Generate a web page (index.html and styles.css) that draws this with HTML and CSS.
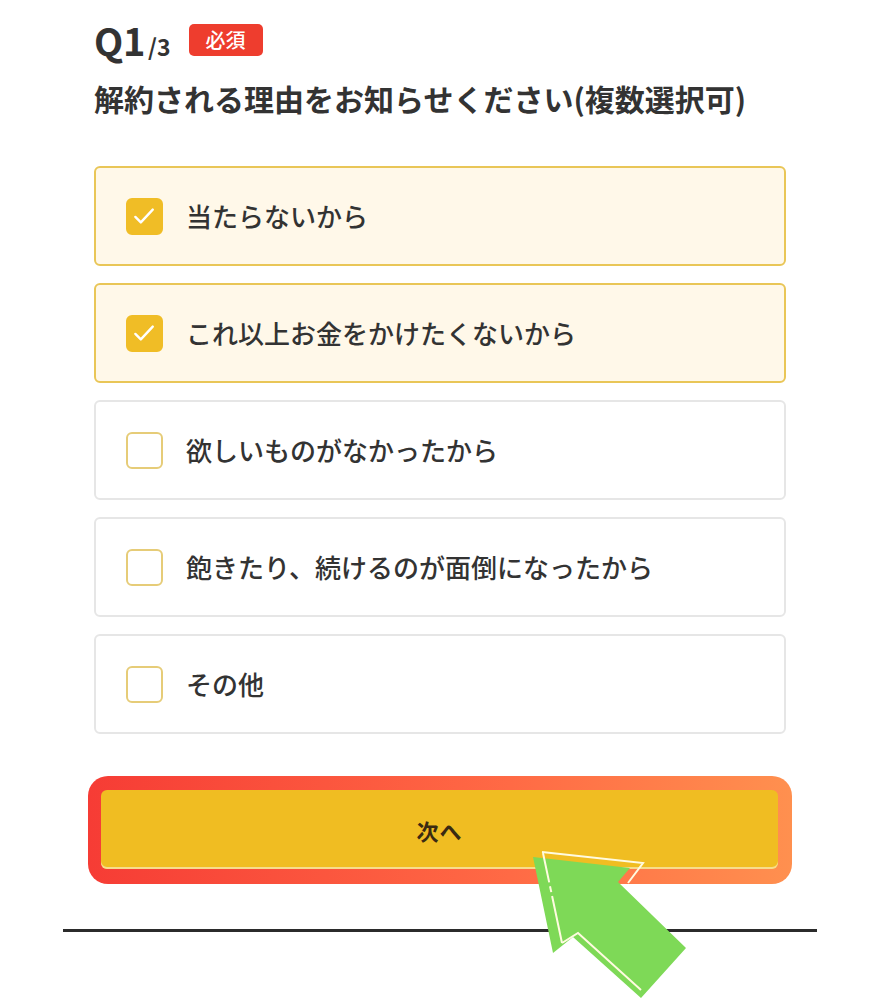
FILE: index.html
```html
<!DOCTYPE html>
<html lang="ja">
<head>
<meta charset="utf-8">
<title>解約アンケート</title>
<link rel="stylesheet" href="styles.css">
</head>
<body>
<main class="page">
  <div class="qhead">
    <span class="qnum">Q1</span><span class="qtotal">/3</span>
    <span class="badge">必須</span>
  </div>
  <h1 class="qtext">解約される理由をお知らせください(複数選択可)</h1>

  <ul class="options">
    <li class="option checked"><span class="box"><svg viewBox="0 0 36 36" width="36" height="36"><polyline points="8,19 14,25 27,11" fill="none" stroke="#fff" stroke-width="2.6" stroke-linecap="round" stroke-linejoin="round"/></svg></span><span class="label">当たらないから</span></li>
    <li class="option checked"><span class="box"><svg viewBox="0 0 36 36" width="36" height="36"><polyline points="8,19 14,25 27,11" fill="none" stroke="#fff" stroke-width="2.6" stroke-linecap="round" stroke-linejoin="round"/></svg></span><span class="label">これ以上お金をかけたくないから</span></li>
    <li class="option"><span class="box"></span><span class="label">欲しいものがなかったから</span></li>
    <li class="option"><span class="box"></span><span class="label">飽きたり、続けるのが面倒になったから</span></li>
    <li class="option"><span class="box"></span><span class="label">その他</span></li>
  </ul>

  <div class="btnwrap">
    <button class="next"><span class="next-inner">次へ</span></button>
  </div>
  <hr class="rule">
</main>

<svg class="pointer" viewBox="0 0 180 160" width="180" height="160">
  <polygon points="13,17 110,28 98,42 166,108 121,158 53,97 33,113" fill="#7ed957"/>
  <polyline points="22,12 123,23 108,43" fill="none" stroke="#fffbe0" stroke-width="2"/>
  <line x1="23" y1="13" x2="42" y2="103" stroke="#fffbe0" stroke-width="2" stroke-dasharray="30 4 6 4 60"/>
  <polyline points="42,103 58,93 121,150" fill="none" stroke="#fffbe0" stroke-width="2"/>
</svg>
</body>
</html>
```

FILE: styles.css
```css
* { box-sizing: border-box; }
html, body { margin: 0; padding: 0; background: #fff; }
body {
  font-family: "Noto Sans CJK JP", "Noto Sans", sans-serif;
  color: #333;
  width: 880px;
  height: 1000px;
  overflow: hidden;
  position: relative;
}
.page {
  width: 692px;
  margin: 0 auto;
  padding-top: 16px;
}
.qhead {
  display: flex;
  align-items: baseline;
  height: 48px;
}
.qnum {
  font-size: 38px;
  font-weight: 700;
  line-height: 48px;
  letter-spacing: -0.3px;
}
.qtotal {
  font-size: 23px;
  font-weight: 700;
  margin-left: 3px;
}
.badge {
  align-self: center;
  margin-left: 18px;
  background: #ee3d2e;
  color: #fff;
  font-size: 20px;
  line-height: 32px;
  height: 32px;
  padding: 0 17px;
  border-radius: 5px;
  font-weight: 500;
}
.qtext {
  margin: 12px 0 0;
  font-size: 30px;
  font-weight: 700;
  line-height: 44px;
  color: #333;
}
.options {
  list-style: none;
  margin: 46px 0 0;
  padding: 0;
  display: flex;
  flex-direction: column;
  gap: 17px;
}
.option {
  height: 100px;
  border: 2px solid #e6e6e6;
  border-radius: 6px;
  background: #fff;
  display: flex;
  align-items: center;
  padding-left: 30px;
}
.option.checked {
  background: #fff8e9;
  border-color: #e9c657;
}
.box {
  width: 37px;
  height: 37px;
  border-radius: 6px;
  border: 2px solid #e6cc78;
  background: #fff;
  flex: none;
  display: flex;
  align-items: center;
  justify-content: center;
}
.option.checked .box {
  background: #f0bd26;
  border-color: #f0bd26;
}
.label {
  margin-left: 23px;
  font-size: 26px;
  line-height: 36px;
  color: #333;
  font-weight: 500;
}
.btnwrap {
  margin-top: 42px;
  display: flex;
  justify-content: center;
}
.next {
  flex: none;
  width: 704px;
  height: 108px;
  border: none;
  border-radius: 20px;
  padding: 14px 14px 15px 13px;
  background: linear-gradient(90deg, #f63c35 0%, #ff6a45 60%, #ff904f 100%);
  display: flex;
  cursor: pointer;
  font-family: inherit;
}
.next-inner {
  flex: 1;
  background: #f0bd22;
  border-radius: 6px;
  box-shadow: inset 0 -2px 0 #f7dc8c;
  display: flex;
  align-items: center;
  justify-content: center;
  font-size: 22px;
  font-weight: 700;
  color: #3a2a12;
  letter-spacing: 1px;
}
.rule {
  width: 754px;
  margin: 45px 0 0 -31px;
  border: none;
  height: 3px;
  background: #2b2b2b;
}
.pointer {
  position: absolute;
  left: 520px;
  top: 840px;
}
```
